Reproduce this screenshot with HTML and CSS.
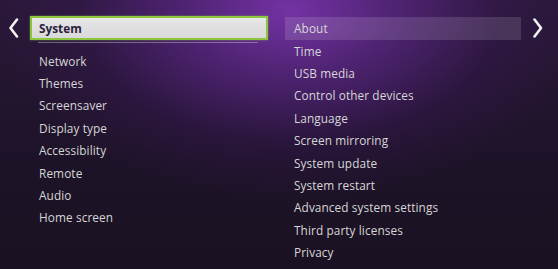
FILE: index.html
```html
<!DOCTYPE html>
<html>
<head>
<meta charset="utf-8">
<link rel="stylesheet" href="styles.css">
</head>
<body>
<div class="screen">
  <div class="arrow arrow-left">
    <svg width="14" height="20" viewBox="0 0 14 20"><polyline points="9,1.5 2.5,10 9,18.5" fill="none" stroke="#f2f2f2" stroke-width="2.6" stroke-linecap="round" stroke-linejoin="round"/></svg>
  </div>
  <div class="menu menu-left">
    <div class="selected">System</div>
    <div class="selected-line"></div>
    <div class="item first">Network</div>
    <div class="item">Themes</div>
    <div class="item">Screensaver</div>
    <div class="item">Display type</div>
    <div class="item">Accessibility</div>
    <div class="item">Remote</div>
    <div class="item">Audio</div>
    <div class="item">Home screen</div>
  </div>
  <div class="menu menu-right">
    <div class="item focus">About</div>
    <div class="item">Time</div>
    <div class="item">USB media</div>
    <div class="item">Control other devices</div>
    <div class="item">Language</div>
    <div class="item">Screen mirroring</div>
    <div class="item">System update</div>
    <div class="item">System restart</div>
    <div class="item">Advanced system settings</div>
    <div class="item">Third party licenses</div>
    <div class="item">Privacy</div>
  </div>
  <div class="arrow arrow-right">
    <svg width="14" height="20" viewBox="0 0 14 20"><polyline points="3.5,1.5 10,10 3.5,18.5" fill="none" stroke="#f2f2f2" stroke-width="2.6" stroke-linecap="round" stroke-linejoin="round"/></svg>
  </div>
</div>
</body>
</html>
```
FILE: styles.css
```css
html, body {
  margin: 0;
  padding: 0;
  width: 558px;
  height: 269px;
  overflow: hidden;
}
body {
  background: #1a1222;
  font-family: "Open Sans", "Liberation Sans", sans-serif;
}
.screen {
  width: 558px;
  height: 269px;
  display: flex;
  align-items: flex-start;
  background:
    radial-gradient(ellipse 300px 190px at 290px 10px, rgba(120, 52, 170, 0.95) 0%, rgba(95, 40, 140, 0.7) 35%, rgba(60, 25, 90, 0.35) 70%, rgba(30, 18, 40, 0) 100%),
    linear-gradient(180deg, #2a1838 0%, #1d1328 60%, #1a1222 100%);
}
.arrow {
  padding-top: 18px;
}
.arrow svg {
  display: block;
}
.arrow-left {
  width: 30px;
  padding-left: 8px;
  box-sizing: border-box;
  flex-shrink: 0;
}
.arrow-right {
  margin-left: 10px;
}
.menu {
  display: flex;
  flex-direction: column;
  flex-shrink: 0;
}
.menu-left {
  width: 238px;
  padding-top: 16px;
}
.menu-right {
  width: 236px;
  margin-left: 17px;
  padding-top: 17px;
}
.item {
  height: 22.35px;
  line-height: 22.35px;
  padding-left: 9px;
  color: #d6d6d6;
  font-size: 11.8px;
  letter-spacing: 0.1px;
  white-space: nowrap;
}
.selected {
  height: 20px;
  line-height: 20px;
  border: 2px solid #8cc63f;
  background: linear-gradient(180deg, #e6e6e6 0%, #d9d9d9 100%);
  color: #2b2140;
  font-weight: 700;
  font-size: 11.8px;
  padding-left: 7px;
  box-shadow: 0 0 2px rgba(140, 198, 63, 0.6);
}
.selected-line {
  height: 1px;
  margin: 2px 10px 0 8px;
  background: rgba(200, 190, 220, 0.45);
}
.item.first {
  margin-top: 6.8px;
}
.focus {
  background: rgba(255, 255, 255, 0.13);
  height: 22.8px;
  line-height: 22.8px;
}
```
